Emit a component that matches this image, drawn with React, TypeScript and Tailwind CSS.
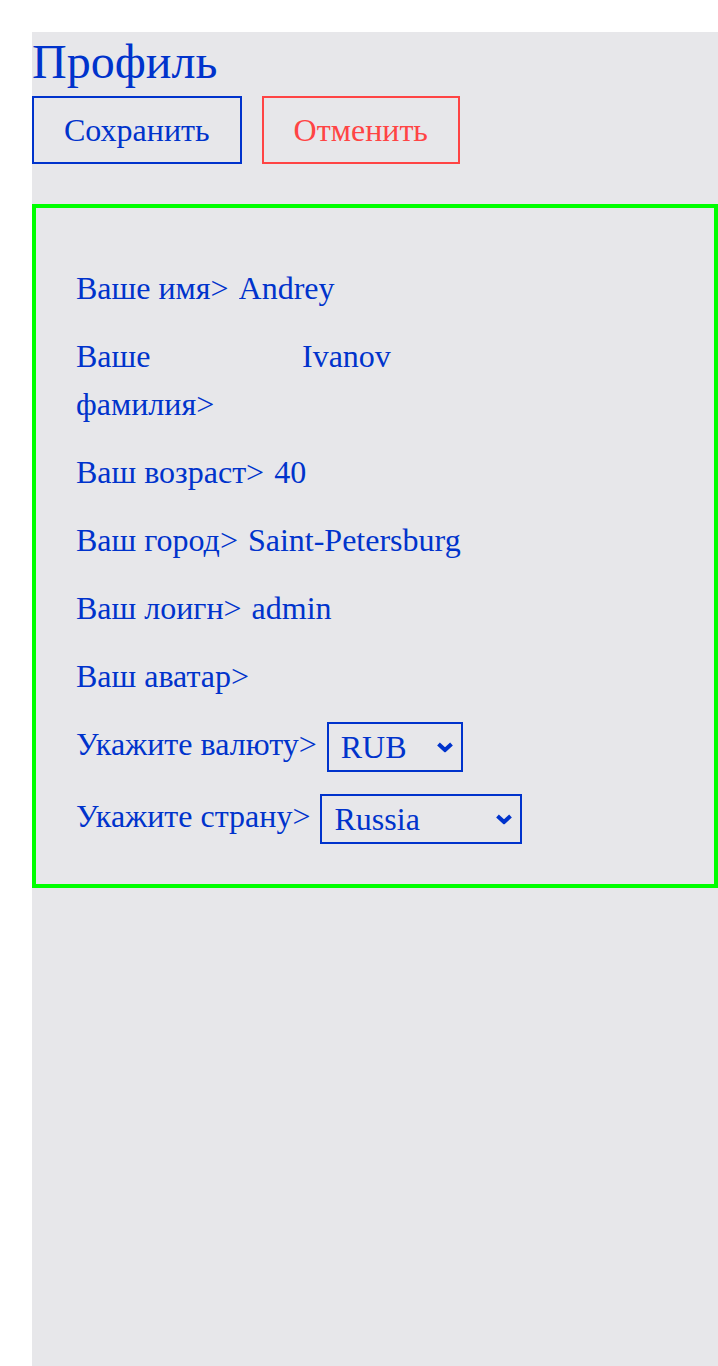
import React, { useState } from 'react';

const Field: React.FC<{ label: string; value: string }> = ({ label, value }) => {
  const [val, setVal] = useState(value);
  return (
    <div className="flex items-baseline gap-[10px]">
      <label className="min-w-0">{label}</label>
      <input
        type="text"
        value={val}
        onChange={(e) => setVal(e.target.value)}
        className="w-[372px] shrink-0 bg-transparent p-0 outline-none"
      />
    </div>
  );
};

const Chevron = () => (
  <svg
    width="18"
    height="11"
    viewBox="0 0 18 11"
    className="pointer-events-none absolute right-[9px] top-1/2 -translate-y-1/2"
  >
    <polyline points="2.5,2.5 9,8.5 15.5,2.5" fill="none" stroke="#0033cc" strokeWidth="4" />
  </svg>
);

const Picker: React.FC<{ label: string; options: string[]; width: string }> = ({ label, options, width }) => {
  const [val, setVal] = useState(options[0]);
  return (
    <div className="flex items-start gap-[10px]">
      <label>{label}</label>
      <div className={`relative mt-[2px] ${width}`}>
        <select
          value={val}
          onChange={(e) => setVal(e.target.value)}
          className="h-[50px] w-full appearance-none border-2 border-[#0033cc] bg-transparent pl-3 leading-[44px] outline-none"
        >
          {options.map((o) => (
            <option key={o}>{o}</option>
          ))}
        </select>
        <Chevron />
      </div>
    </div>
  );
};

export default function App() {
  return (
    <div className="bg-white pt-8 pl-8 font-['Liberation_Serif',serif]">
      <div className="min-h-[calc(100vh-2rem)] bg-[#e7e7ea] text-[#0033cc]">
        <h1 className="text-[48px] leading-[60px]">Профиль</h1>

        {/* Actions */}
        <div className="mt-1 flex gap-5 text-[32px] leading-[48px]">
          <button className="border-2 border-[#0033cc] px-[30px] py-2">Сохранить</button>
          <button className="border-2 border-[#ff4444] px-[30px] py-2 text-[#ff4444]">Отменить</button>
        </div>

        {/* Profile form */}
        <div className="mt-10 flex flex-col gap-5 border-4 border-[#00ff00] px-10 pt-14 pb-10 text-[32px] leading-[48px]">
          <Field label="Ваше имя>" value="Andrey" />
          <Field label="Ваше фамилия>" value="Ivanov" />
          <Field label="Ваш возраст>" value="40" />
          <Field label="Ваш город>" value="Saint-Petersburg" />
          <Field label="Ваш лоигн>" value="admin" />
          <div>Ваш аватар&gt;</div>
          <Picker label="Укажите валюту>" options={['RUB', 'USD', 'EUR']} width="w-[136px]" />
          <Picker label="Укажите страну>" options={['Russia', 'Belarus', 'Kazakhstan']} width="w-[202px]" />
        </div>
      </div>
    </div>
  );
}
